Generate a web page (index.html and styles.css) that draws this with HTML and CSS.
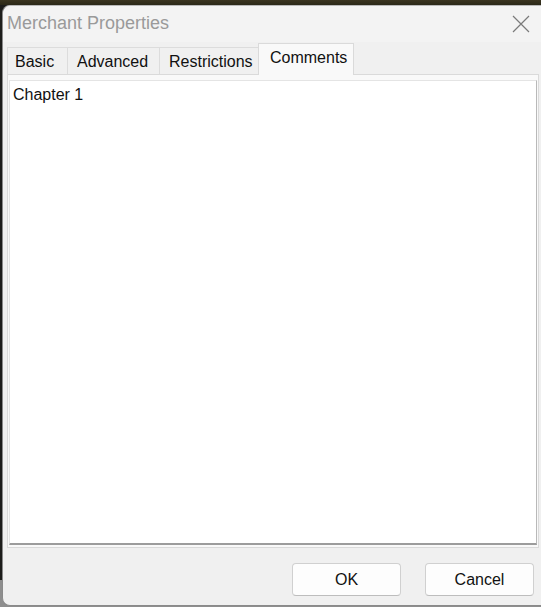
FILE: index.html
```html
<!DOCTYPE html>
<html>
<head>
<meta charset="utf-8">
<link rel="stylesheet" href="styles.css">
</head>
<body>
<div class="desktop">
  <div class="window">
    <div class="titlebar">
      <span class="title">Merchant Properties</span>
      <svg class="close" width="18" height="18" viewBox="0 0 18 18"><path d="M1 1 L17 17 M17 1 L1 17" stroke="#7a7a7a" stroke-width="1.2" fill="none"/></svg>
    </div>
    <div class="tabs">
      <div class="tab tab-basic">Basic</div>
      <div class="tab tab-adv">Advanced</div>
      <div class="tab tab-restr">Restrictions</div>
      <div class="tab tab-active">Comments</div>
    </div>
    <div class="panel">
      <div class="textbox">Chapter 1</div>
    </div>
    <div class="footer">
      <button class="btn">OK</button>
      <button class="btn">Cancel</button>
    </div>
  </div>
</div>
</body>
</html>
```
FILE: styles.css
```css
html, body {
  margin: 0;
  padding: 0;
  background: #1c1c1a;
  font-family: "Liberation Sans", Arial, sans-serif;
}
.desktop {
  width: 541px;
  height: 607px;
  overflow: hidden;
  padding: 5px 0 0 2px;
  box-sizing: border-box;
  background: linear-gradient(to bottom, #3a3520 0, #2b2818 5px, #1d1d1b 5px, #1d1d1b 580px, #8e8e8e 580px);
}
.window {
  height: 601px;
  background: #f0f0f0;
  border-left: 1px solid #8a8a8a;
  border-bottom: 1px solid #8a8a8a;
  border-top: 1px solid #b8b8b8;
  border-radius: 8px 0 0 8px;
  display: flex;
  flex-direction: column;
  box-sizing: border-box;
}
.titlebar {
  height: 36px;
  display: flex;
  align-items: center;
  justify-content: space-between;
  padding: 0 11px 0 4px;
  background: #f3f3f3;
  border-radius: 8px 0 0 0;
}
.title {
  font-size: 18px;
  color: #9a9a9a;
  position: relative;
  top: -1px;
}
.close { margin-top: -1px; }
.tabs {
  display: flex;
  align-items: flex-end;
  margin: 1px 0 0 4px;
  height: 31px;
  position: relative;
  z-index: 1;
}
.tab {
  height: 27px;
  box-sizing: border-box;
  font-size: 16px;
  color: #111;
  line-height: 27px;
  border: 1px solid #dcdcdc;
  border-bottom: none;
  border-right: none;
  background: #f0f0f0;
  white-space: nowrap;
}
.tab-basic { width: 60px; padding-left: 7px; }
.tab-adv { width: 92px; padding-left: 9px; }
.tab-restr { width: 99px; padding-left: 9px; }
.tab-active {
  width: 96px;
  height: 32px;
  padding-left: 11px;
  line-height: 28px;
  background: #f9f9f9;
  border: 1px solid #dadada;
  border-bottom: none;
  margin-bottom: -1px;
}
.panel {
  margin: 0 2px 0 4px;
  height: 474px;
  box-sizing: border-box;
  border: 1px solid #dadada;
  background: #f9f9f9;
  padding: 5px 1px 2px 1px;
}
.textbox {
  height: 100%;
  box-sizing: border-box;
  background: #ffffff;
  border-top: 1px solid #e4e4e4;
  border-left: 1px solid #e4e4e4;
  border-right: 1px solid #b9b9b9;
  border-bottom: 2px solid #9c9c9c;
  font-size: 16px;
  color: #111;
  padding: 5px 3px;
}
.footer {
  display: flex;
  justify-content: flex-end;
  gap: 24px;
  padding: 15px 7px 0 0;
}
.btn {
  width: 109px;
  height: 33px;
  background: #fdfdfd;
  border: 1px solid #d0d0d0;
  border-bottom-color: #bdbdbd;
  border-radius: 4px;
  font-family: "Liberation Sans", Arial, sans-serif;
  font-size: 16px;
  color: #111;
  padding: 0;
}
```
